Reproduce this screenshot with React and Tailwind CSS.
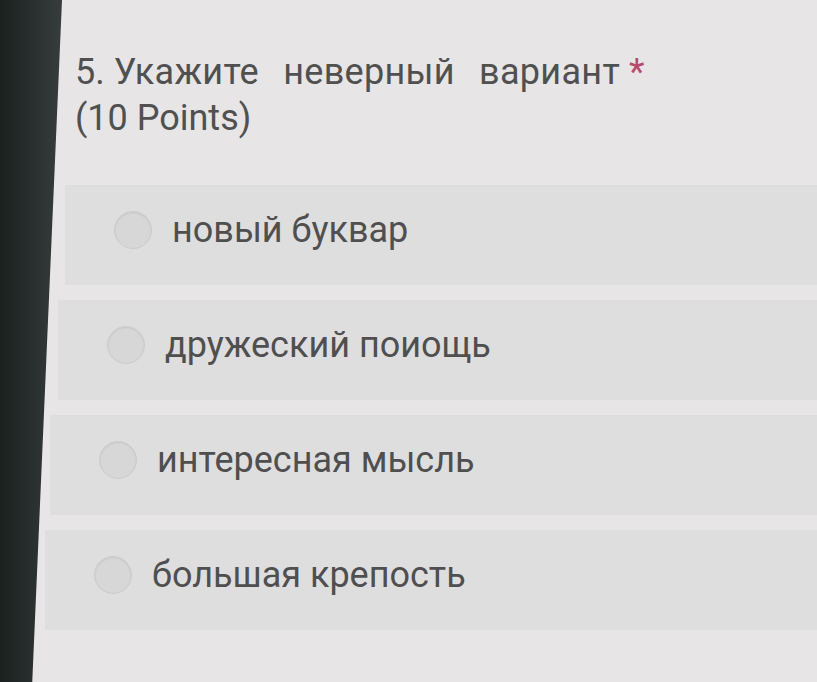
import React from "react"

// rows drift left a little: the photo is tilted
const options = [
  { label: "новый буквар", shift: "ml-[3px]" },
  { label: "дружеский поиощь", shift: "ml-[-4px]" },
  { label: "интересная мысль", shift: "ml-[-12px]" },
  { label: "большая крепость", shift: "ml-[-17px]" },
]

const Radio = () => (
  <span className="w-[38px] h-[38px] rounded-full bg-[#d8d7d8] border border-[#cdcccd] shadow-[inset_0_1px_2px_rgba(0,0,0,0.08)] shrink-0"></span>
)

const App = () => {
  return (
    <div
      className="flex w-[817px] h-[682px] overflow-hidden bg-[#e7e5e6]"
      style={{ fontFamily: "Roboto, 'Noto Sans', sans-serif" }}
    >
      {/* dark edge of the phone */}
      <div className="w-[62px] shrink-0 bg-gradient-to-r from-[#1c2120] to-[#363d3c] [clip-path:polygon(0_0,100%_0,52%_100%,0_100%)]"></div>

      <div className="flex-1 flex flex-col">
        {/* Question */}
        <div className="pt-[49px] pl-[13px] text-[#505050] text-[36px] leading-[46px]">
          <p>
            5. <span className="[word-spacing:15px] tracking-[0.3px]">Укажите неверный вариант</span>{" "}
            <span className="text-[#b84a6e]">*</span>
          </p>
          <p>(10 Points)</p>
        </div>

        {/* Options */}
        <div className="mt-[44px] flex flex-col gap-[15px]">
          {options.map((option) => (
            <div
              key={option.label}
              className={`${option.shift} h-[100px] flex items-center gap-[20px] pl-[49px] pb-[10px] bg-[#dfdedf]`}
            >
              <Radio />
              <span className="text-[#4f4f4f] text-[36px]">{option.label}</span>
            </div>
          ))}
        </div>
      </div>
    </div>
  )
}

export default App
